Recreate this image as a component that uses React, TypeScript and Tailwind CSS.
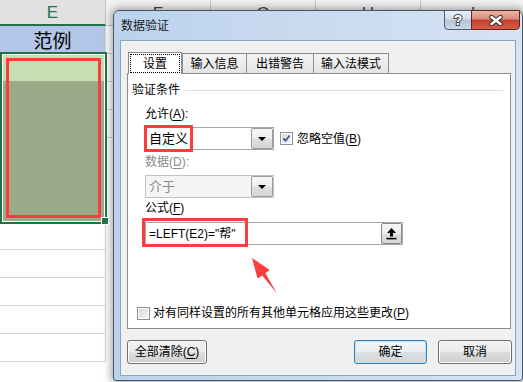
import React from "react";

const ui = "font-['Liberation_Sans','Noto_Sans_CJK_SC',sans-serif]";

function Key({ k }: { k: string }) {
  return <span className="underline underline-offset-[2px]">{k}</span>;
}

function DropButton() {
  return (
    <div className="flex h-full w-[22px] items-center justify-center rounded-[2px] border border-[#9c9c9c] bg-[linear-gradient(to_bottom,#f8f8f8_0%,#eeeeee_50%,#dfdfdf_51%,#d6d6d6_100%)]">
      <svg width="8" height="4" viewBox="0 0 8 4">
        <path d="M0 0h8L4 4z" fill="#000" />
      </svg>
    </div>
  );
}

function Check({ checked }: { checked?: boolean }) {
  return (
    <div className="flex h-[13px] w-[13px] shrink-0 items-center justify-center border border-[#8f8f8f] bg-white p-px">
      <div className="flex h-full w-full items-center justify-center bg-[linear-gradient(135deg,#d8d8d8,#f6f6f6)]">
        {checked && (
          <svg width="10" height="9" viewBox="0 0 10 9">
            <path d="M1.5 4.5 L4 7 L8.5 1.2" fill="none" stroke="#3d5a96" strokeWidth="2" />
          </svg>
        )}
      </div>
    </div>
  );
}

function WinButton({ children, primary, w }: { children: React.ReactNode; primary?: boolean; w: string }) {
  return (
    <div
      className={
        primary
          ? "flex h-[24px] w-[73px] items-center justify-center rounded-[3px] border border-[#3c7fb1] bg-[linear-gradient(to_bottom,#f3f6f8_0%,#ebeef0_50%,#dde1e3_50%,#d2d6d8_100%)] text-[12px] shadow-[inset_0_0_0_1px_#b8e2f4]"
          : w === "wide"
          ? "flex h-[24px] w-[80px] items-center justify-center rounded-[3px] border border-[#707070] bg-[linear-gradient(to_bottom,#f2f2f2_0%,#ebebeb_50%,#dddddd_50%,#cfcfcf_100%)] text-[12px] shadow-[inset_0_0_0_1px_#fbfbfb]"
          : "flex h-[24px] w-[74px] items-center justify-center rounded-[3px] border border-[#707070] bg-[linear-gradient(to_bottom,#f2f2f2_0%,#ebebeb_50%,#dddddd_50%,#cfcfcf_100%)] text-[12px] shadow-[inset_0_0_0_1px_#fbfbfb]"
      }
    >
      {children}
    </div>
  );
}

function Sheet() {
  const cols = ["F", "G", "H", "I"];
  return (
    <div className="flex">
      <div className="flex w-[106px] shrink-0 flex-col">
        <div className="flex h-[26px] items-center justify-center border-r border-b-2 border-r-[#c8c8c8] border-b-[#217346] bg-[#e1e1e1] pt-[2px] font-['Liberation_Sans',sans-serif] text-[17px] text-[#217346]">
          E
        </div>
        <div className="flex h-[26px] items-center justify-center border-r border-[#d4d4d4] bg-[#b4c6e7] font-['Noto_Sans_CJK_SC',sans-serif] text-[19px] leading-none text-black">
          范例
        </div>
        <div className="relative z-10 flex h-[172px] w-[107px] flex-col border-2 border-[#217346] bg-white p-px">
          <div className="h-[26px] bg-[#c6e0b4]" />
          <div className="flex-1 bg-[#9bab8a]" />
          <div className="absolute left-[4px] top-[4px] h-[160px] w-[95px] border-[3px] border-[#fc3d3d]" />
          <div className="absolute left-[99px] top-[163px] h-[8px] w-[8px] border border-white bg-[#217346]" />
        </div>
        <div className="h-[26px] border-r border-b border-[#d4d4d4]" />
        <div className="h-[28px] border-r border-b border-[#d4d4d4]" />
        <div className="h-[28px] border-r border-b border-[#d4d4d4]" />
        <div className="h-[28px] border-r border-b border-[#d4d4d4]" />
        <div className="h-[28px] border-r border-b border-[#d4d4d4]" />
      </div>
      {cols.map((c) => (
        <div key={c} className="flex w-[105px] shrink-0 flex-col">
          <div className="flex h-[26px] items-center justify-center border-r border-b border-[#c8c8c8] bg-[#f3f3f3] pt-[2px] font-['Liberation_Sans',sans-serif] text-[17px] text-[#444]">
            {c}
          </div>
          <div className="h-[28px] border-r border-b border-[#d4d4d4]" />
          <div className="h-[28px] border-r border-b border-[#d4d4d4]" />
          <div className="h-[28px] border-r border-b border-[#d4d4d4]" />
          <div className="h-[28px] border-r border-b border-[#d4d4d4]" />
        </div>
      ))}
    </div>
  );
}

function Dialog() {
  return (
    <div className={`absolute left-[113px] top-[10px] flex h-[371px] w-[410px] flex-col rounded-t-[6px] rounded-b-[3px] border border-[#46566a] bg-[linear-gradient(to_right,#bcd2ec,#d6e4f4)] px-[6px] pb-[4px] text-black shadow-[0_0_8px_2px_rgba(0,0,0,0.35)] ${ui}`}>
      <div className="flex h-[29px] items-center pl-[1px] text-[12px] text-[#1a1a1a]">数据验证</div>

      <div className="absolute -top-px right-[2px] flex h-[20px]">
        <div className="flex w-[28px] items-center justify-center rounded-bl-[4px] border border-[#4d5d70] bg-[linear-gradient(to_bottom,#e8eff7_0%,#d2deea_45%,#b5c6d9_50%,#cad8e7_100%)]">
          <span className="text-[14px] font-bold leading-none text-white [-webkit-text-stroke:2px_#4a4a4a] [paint-order:stroke_fill]">?</span>
        </div>
        <div className="-ml-px flex w-[49px] items-center justify-center rounded-br-[4px] border border-[#5a2a22] bg-[linear-gradient(to_bottom,#ebb4a8_0%,#dc8a7a_45%,#c5412e_50%,#d55c44_100%)]">
          <svg width="14" height="11" viewBox="0 0 14 11">
            <path d="M2.5 2 L11.5 9 M11.5 2 L2.5 9" stroke="#3a2a28" strokeWidth="4.5" strokeLinecap="round" />
            <path d="M2.5 2 L11.5 9 M11.5 2 L2.5 9" stroke="#fff" strokeWidth="2.5" strokeLinecap="round" />
          </svg>
        </div>
      </div>

      <div className="flex flex-1 flex-col border border-[#8ea4bc] bg-[#f0f0f0] pl-[6px] pt-[11px]">
        <div className="flex h-[21px] items-end text-[12px]">
          <div className="relative z-10 -mb-px ml-[1px] flex h-[22px] w-[54px] items-center justify-center border border-b-0 border-[#898c95] bg-white p-[1px]">
            <div className="flex h-full w-full items-center justify-center border border-dotted border-black">设置</div>
          </div>
          <div className="flex h-[20px] w-[65px] items-center justify-center border border-b-0 border-[#898c95] bg-[linear-gradient(to_bottom,#f4f4f4,#e4e4e4)]">输入信息</div>
          <div className="-ml-px flex h-[20px] w-[68px] items-center justify-center border border-b-0 border-[#898c95] bg-[linear-gradient(to_bottom,#f4f4f4,#e4e4e4)]">出错警告</div>
          <div className="-ml-px flex h-[20px] w-[76px] items-center justify-center border border-b-0 border-[#898c95] bg-[linear-gradient(to_bottom,#f4f4f4,#e4e4e4)]">输入法模式</div>
        </div>

        <div className="flex h-[256px] w-[384px] flex-col border border-[#898c95] bg-white pt-[8px] text-[12px]">
          <div className="flex h-[16px] items-center gap-[5px] pl-[4px] pr-[7px] leading-[16px]">
            <span>验证条件</span>
            <div className="h-px flex-1 bg-[#d5dfe5]" />
          </div>

          <div className="ml-[17px] flex flex-col">
            <div className="mt-[8px] h-[16px] leading-[16px]">
              允许(<Key k="A" />):
            </div>
            <div className="mt-[5px] flex h-[23px] items-center">
              <div className="flex h-[23px] w-[129px] items-stretch border border-[#a5a5a5] bg-white">
                <div className="flex flex-1 items-center pl-[3px] text-[13px]">自定义</div>
                <DropButton />
              </div>
              <div className="ml-[6px] flex items-center gap-[4px]">
                <Check checked />
                <span>
                  忽略空值(<Key k="B" />)
                </span>
              </div>
            </div>
            <div className="mt-[4px] h-[16px] leading-[16px] text-[#8a8a8a]">
              数据(<Key k="D" />):
            </div>
            <div className="mt-[5px] flex h-[23px] w-[129px] items-stretch border border-[#c2c2c2] bg-[#f4f4f4]">
              <div className="flex flex-1 items-center pl-[3px] text-[13px] text-[#8a8a8a]">介于</div>
              <DropButton />
            </div>
            <div className="mt-[2px] h-[16px] leading-[16px]">
              公式(<Key k="F" />)
            </div>
            <div className="mt-[6px] flex h-[23px] w-[258px] items-stretch border border-[#a5a5a5] bg-white">
              <div className="flex flex-1 items-center pl-[3px] text-[12px]">=LEFT(E2)="帮"</div>
              <div className="flex w-[21px] items-center justify-center rounded-[2px] border border-[#8a8a8a] bg-[linear-gradient(to_bottom,#f8f8f8_0%,#eeeeee_50%,#dfdfdf_51%,#d6d6d6_100%)]">
                <svg width="11" height="12" viewBox="0 0 11 12">
                  <path d="M5.5 0 L10 5 L7 5 L7 8.5 L4 8.5 L4 5 L1 5 Z" fill="#000" />
                  <rect x="0.5" y="9.8" width="10" height="1.6" fill="#000" />
                </svg>
              </div>
            </div>
          </div>

          <div className="ml-[9px] mt-[60px] flex h-[16px] items-center gap-[3px]">
            <Check />
            <span>
              对有同样设置的所有其他单元格应用这些更改(<Key k="P" />)
            </span>
          </div>
        </div>

        <div className="mt-[11px] flex w-[385px] items-center justify-between">
          <WinButton w="wide">
            全部清除(<Key k="C" />)
          </WinButton>
          <div className="flex gap-[11px]">
            <WinButton primary w="">
              确定
            </WinButton>
            <WinButton w="">取消</WinButton>
          </div>
        </div>
      </div>
    </div>
  );
}

export default function App() {
  return (
    <div className="relative h-[382px] w-[523px] overflow-hidden bg-white">
      <Sheet />
      <Dialog />
      <div className="absolute left-[144px] top-[125px] h-[27px] w-[49px] border-[3px] border-[#fc3d3d]" />
      <div className="absolute left-[142px] top-[218px] h-[29px] w-[106px] border-[3px] border-[#fc3d3d]" />
      <svg className="absolute left-0 top-0" width="523" height="382" viewBox="0 0 523 382">
        <path d="M252 258 L257.5 278.5 L262.3 275.4 L277 293.5 L265.4 273.2 L269.6 270 Z" fill="#fc3d3d" />
      </svg>
    </div>
  );
}
